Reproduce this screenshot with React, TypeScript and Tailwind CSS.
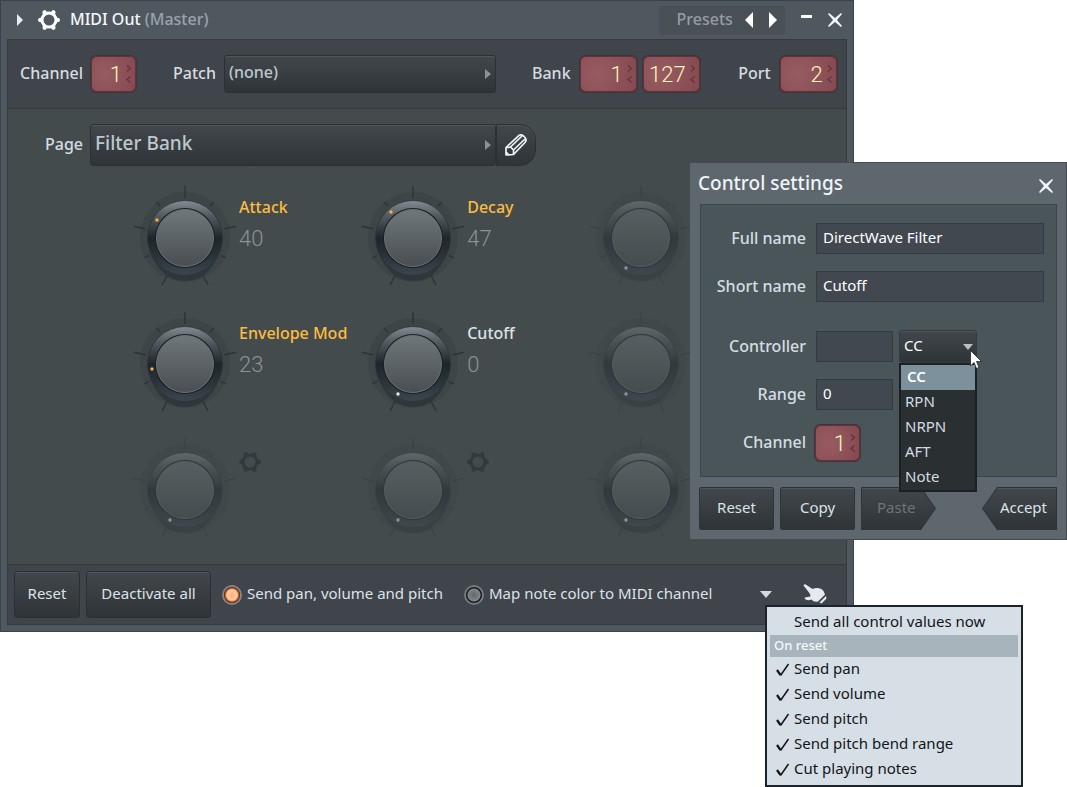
import { useId, useState } from "react"

type KnobData = {
  label: string
  value: number
  dot: [number, number]
  state: "linked" | "active" | "off"
}

const off: KnobData = { label: "", value: 0, dot: [37, 84], state: "off" }

const knobs: KnobData[] = [
  { label: "Attack", value: 40, dot: [24, 36], state: "linked" },
  { label: "Decay", value: 47, dot: [30, 28], state: "linked" },
  off,
  { label: "Envelope Mod", value: 23, dot: [19, 59], state: "linked" },
  { label: "Cutoff", value: 0, dot: [37, 84], state: "active" },
  off,
  off,
  off,
  off,
]

const controllerTypes = ["CC", "RPN", "NRPN", "AFT", "Note"]

const resetOptions = ["Send pan", "Send volume", "Send pitch", "Send pitch bend range", "Cut playing notes"]

const labelText = "text-base font-medium text-[#d5dde2] pb-[2px]"
const buttonFace = "bg-gradient-to-b from-[#42474c] to-[#2f3438] shadow-[inset_0_1px_0_#50565b]"
const field = "h-[31px] border border-[#333b42] bg-[#424850] px-[6px] pb-[3px] text-[15px] text-white outline-none"

function Gear({ className }: { className: string }) {
  return (
    <svg viewBox="-11 -11 22 22" className={className} aria-hidden="true">
      <circle r="7" fill="none" stroke="currentColor" strokeWidth="3" />
      {[0, 60, 120, 180, 240, 300].map((a) => (
        <path key={a} d="M6.5 -4 C7.6 -2.4 8.4 -2 9.6 -2 Q11 -1.6 11 0 Q11 1.6 9.6 2 C8.4 2 7.6 2.4 6.5 4Z" fill="currentColor" transform={`rotate(${a})`} />
      ))}
    </svg>
  )
}

function Cross() {
  return (
    <svg viewBox="0 0 14 14" className="size-[14px]" aria-hidden="true">
      <path d="M0 1 L1 0 L7 5 L13 0 L14 1 L9 7 L14 13 L13 14 L7 9 L1 14 L0 13 L5 7Z" fill="#f2f6f8" />
    </svg>
  )
}

function Spinner({ label, value, wide }: { label: string; value: string; wide?: boolean }) {
  return (
    <div className={`relative h-[38px] shrink-0 rounded-md border border-[#343a40] bg-[#6d2f37] p-px ${wide ? "w-[59px]" : "w-[47px]"}`}>
      <input
        aria-label={label}
        inputMode="numeric"
        defaultValue={value}
        className="block h-full w-full rounded-[5px] bg-[radial-gradient(circle_at_30%_50%,#985b62,#844a51)] pr-[13px] text-right font-['Roboto',sans-serif] text-[22px] font-light text-[#fdf6b8] outline-none"
      />
      <svg viewBox="0 0 6 20" className="absolute top-2 right-[4px] h-5 w-[6px]" aria-hidden="true">
        <path d="M1 1.500 L4.500 4.500 L1 7.500 M4.500 12.500 L1 15.500 L4.500 18.500" fill="none" stroke="#66303a" strokeWidth="1.200" />
      </svg>
    </div>
  )
}

function Knob({ knob }: { knob: KnobData }) {
  const id = useId()
  const isOff = knob.state === "off"
  const dotColor = knob.state === "linked" ? "#ffae3c" : "#e6edf0"
  return (
    <div className="flex h-[126px]">
      <div className="relative h-[104px] w-[104px] shrink-0">
        <svg viewBox="0 0 104 104" className={`h-full w-full ${isOff ? "opacity-45" : ""}`} aria-hidden="true">
          <defs>
            <linearGradient id={`${id}r`} x1="0" y1="0" x2="0" y2="1">
              <stop offset="0" stopColor="#858c90" />
              <stop offset="0.2" stopColor="#545c63" />
              <stop offset="0.5" stopColor="#1e252b" />
              <stop offset="0.75" stopColor="#2b333b" />
              <stop offset="1" stopColor="#3d454e" />
            </linearGradient>
            <linearGradient id={`${id}f`} x1="0" y1="0" x2="0" y2="1">
              <stop offset="0" stopColor="#70777a" />
              <stop offset="1" stopColor="#484e51" />
            </linearGradient>
          </defs>
          <circle cx="52" cy="53" r="45" fill="#3d4346" opacity="0.8" />
          <path
            d="M52 2V14 M76.700 22.300L81 18 M91.300 45L103 42.300 M87.700 71.300L93 74 M69.300 90.300L75 101 M27.300 22.300L23 18 M12.700 45L1 42.300 M16.300 71.300L11 74 M34.700 90.300L29 101"
            stroke="#2d3337"
            strokeWidth={isOff ? 1 : 1.4}
          />
          <path d="M14.500 56 C17 72 27 97 52 97 C77 97 87 72 89.500 56Z" fill="#30373b" />
          <circle cx="52" cy="54" r="37.500" fill={`url(#${id}r)`} stroke="#2c3338" strokeWidth="0.800" />
          <circle cx="52" cy="54" r="30" fill="#192024" />
          <circle cx="52" cy="54" r="28.500" fill={`url(#${id}f)`} stroke="#6b7275" strokeWidth="1" />
          <circle cx={knob.dot[0]} cy={knob.dot[1]} r="1.700" fill={dotColor} />
        </svg>
        <input
          type="range"
          min={0}
          max={127}
          defaultValue={knob.value}
          disabled={isOff}
          aria-label={knob.label || "Unassigned"}
          className="absolute inset-0 h-full w-full opacity-0"
        />
      </div>
      {isOff ? (
        <button aria-label="Assign control" className="mt-[15px] ml-[2px] size-[22px] text-[#33393d]">
          <Gear className="size-[22px]" />
        </button>
      ) : (
        <div className="pt-[11px] pl-[2px] whitespace-nowrap">
          <div className={`text-base leading-6 font-medium ${knob.state === "linked" ? "text-[#fdbc3f]" : "text-[#dbe3e8]"}`}>{knob.label}</div>
          <div className="mt-[5px] font-['Roboto',sans-serif] text-[22px] leading-[30px] font-light text-[#8b9298]">{knob.value}</div>
        </div>
      )}
    </div>
  )
}

function Picker({ label, value, large }: { label: string; value: string; large?: boolean }) {
  return (
    <div className="relative min-w-0 flex-1">
      <select
        aria-label={label}
        className={`block w-full appearance-none rounded-[3px] border border-[#2b3034] px-1 pb-1 font-medium text-[#bec8ce] outline-none ${buttonFace} ${large ? "h-[42px] text-[19px]" : "h-[38px] text-base"}`}
      >
        <option>{value}</option>
      </select>
      <svg viewBox="0 0 6 10" className="pointer-events-none absolute top-1/2 right-[5px] h-[10px] w-[6px] -translate-y-1/2" aria-hidden="true">
        <path d="M0 0 L6 5 L0 10Z" fill="#8a9298" />
      </svg>
    </div>
  )
}

function Lamp({ label, defaultChecked }: { label: string; defaultChecked?: boolean }) {
  return (
    <label className="flex items-center gap-[5px] text-[15px] whitespace-nowrap text-[#dbe3e8]">
      <input
        type="checkbox"
        defaultChecked={defaultChecked}
        className="size-5 shrink-0 appearance-none rounded-full border-2 border-[#767b7f] bg-[radial-gradient(circle,#62686b_0,#7f8588_6px,#15191c_7px)] checked:border-[#8a8483] checked:bg-[radial-gradient(circle_at_50%_50%,#ffa878_0,#ffd3a4_5px,#f58a55_6px,#3b0f08_8px)]"
      />
      <span className="pb-[2px]">{label}</span>
    </label>
  )
}

function TitleBar() {
  return (
    <header className="flex h-[38px] items-center pr-[5px] pl-[10px]">
      <button aria-label="Expand" className="w-[6px]">
        <svg viewBox="0 0 6 12" className="h-3 w-[6px]" aria-hidden="true">
          <path d="M0 0 L6 6 L0 12Z" fill="#e8eef2" />
        </svg>
      </button>
      <button aria-label="Plugin options" className="ml-[15px] text-white">
        <Gear className="size-[22px]" />
      </button>
      <h1 className="ml-[10px] pb-[2px] text-base font-medium text-[#f4f8fa]">
        MIDI Out <span className="text-[#9aa3aa]">(Master)</span>
      </h1>
      <div className="ml-auto flex h-[29px] items-center rounded-[3px] bg-[#495056] pr-2 pl-[18px]">
        <span className="w-[68px] pb-[2px] text-base font-medium text-[#959da4]">Presets</span>
        <button aria-label="Previous preset" className="mr-4">
          <svg viewBox="0 0 8 16" className="h-4 w-2" aria-hidden="true">
            <path d="M8 0 L0 8 L8 16Z" fill="#fff" />
          </svg>
        </button>
        <button aria-label="Next preset">
          <svg viewBox="0 0 8 16" className="h-4 w-2" aria-hidden="true">
            <path d="M0 0 L8 8 L0 16Z" fill="#fff" />
          </svg>
        </button>
      </div>
      <button aria-label="Minimize" className="ml-4 flex h-[14px] w-[11px]">
        <span className="mt-[2px] h-[3px] w-full bg-white" />
      </button>
      <button aria-label="Close" className="ml-4">
        <Cross />
      </button>
    </header>
  )
}

function MainWindow() {
  return (
    <main className="w-4/5 border border-[#3b4249] bg-[#50585f] px-[6px] pb-[6px]">
      <TitleBar />
      <div className="border border-[#353b41] bg-[#444b4d]">
        <div className="flex h-[69px] items-center border-b border-[#34393d] bg-[#40444b] pr-2">
          <span className={`${labelText} w-[75px] shrink-0 text-right`}>Channel</span>
          <span className="ml-[7px]">
            <Spinner label="Channel" value="1" />
          </span>
          <span className={`${labelText} mr-2 w-[79px] shrink-0 text-right`}>Patch</span>
          <Picker label="Patch" value="(none)" />
          <span className={`${labelText} mr-2 w-[75px] shrink-0 text-right`}>Bank</span>
          <div className="flex gap-1">
            <Spinner label="Bank MSB" value="1" wide />
            <Spinner label="Bank LSB" value="127" wide />
          </div>
          <span className={`${labelText} mr-2 w-[70px] shrink-0 text-right`}>Port</span>
          <Spinner label="Port" value="2" wide />
        </div>

        <div className="h-[455px] pt-[15px]">
          <div className="flex items-center">
            <span className={`${labelText} mr-[7px] w-[75px] shrink-0 text-right`}>Page</span>
            <div className="flex w-[446px]">
              <Picker label="Page" value="Filter Bank" large />
              <button aria-label="Rename page" className={`flex h-[42px] w-10 items-center justify-center rounded-r-[16px] border border-[#2b3034] ${buttonFace}`}>
                <svg viewBox="0 0 22 22" className="size-[22px]" fill="none" stroke="#eef4f8" strokeWidth="1.7" strokeLinejoin="round" aria-hidden="true">
                  <path d="M1 21 L1 13.500 L13.500 1.800 Q16 0 18.500 2 L20 3.500 Q22 6 20 8.500 L8.500 20.500Z" />
                  <path d="M1 13.500 L5.500 13 L8.500 16 L8.500 20.500 M5.500 13 L17 2 M8.500 16 L20 5 M1 18 L4 21" />
                </svg>
              </button>
            </div>
          </div>
          <div className="mt-[18px] mr-7 ml-[125px] grid grid-cols-3">
            {knobs.map((k, i) => (
              <Knob key={i} knob={k} />
            ))}
          </div>
        </div>

        <footer className="flex h-[60px] items-center border-t border-[#34393d] bg-[#40444b] px-[6px]">
          <button className={`h-[47px] w-[66px] rounded-[3px] border border-[#2a2f33] pb-[2px] text-[15px] text-[#dbe3e8] ${buttonFace}`}>Reset</button>
          <button className={`mr-[11px] ml-[6px] h-[47px] w-[125px] rounded-[3px] border border-[#2a2f33] pb-[2px] text-[15px] text-[#dbe3e8] ${buttonFace}`}>
            Deactivate all
          </button>
          <div className="w-[242px]">
            <Lamp label="Send pan, volume and pitch" defaultChecked />
          </div>
          <Lamp label="Map note color to MIDI channel" />
          <button aria-label="Options" className="ml-auto">
            <svg viewBox="0 0 12 7" className="h-[7px] w-3" aria-hidden="true">
              <path d="M0 0 H12 L6 7Z" fill="#d3dbe1" />
            </svg>
          </button>
          <button aria-label="Assign last tweaked" className="mr-[13px] ml-[31px]">
            <svg viewBox="0 0 24 22" className="h-[22px] w-6" aria-hidden="true">
              <path d="M0.500 1.500 Q1.500 -0.500 3.500 1 L9.500 5 Q12 3.500 15 4 Q19 4.500 20.500 7 L22 10.500 L15 17.500 Q11 18.500 8.500 15.500 Q4 17 2 15 Q1 13.500 3 13.200 L7.500 12.500 Q7.500 10 6 8.500Z" fill="#e3ebf1" />
              <path d="M16.500 18.500 L23 12 L23.500 14.500 L18.500 19.500Z" fill="#e3ebf1" />
            </svg>
          </button>
        </footer>
      </div>
    </main>
  )
}

function ControlDialog() {
  const [type, setType] = useState("CC")
  const rowLabel = `${labelText} w-[105px] shrink-0 text-right`
  const button = `h-[43px] w-[75px] rounded-[2px] border border-[#2d343a] pb-[2px] text-[15px] text-[#dbe3e8] ${buttonFace}`
  return (
    <section aria-label="Control settings" className="absolute top-[162px] right-0 w-[377px] border-t border-r border-b border-[#444b52] bg-[#5f676e] pr-[9px] pb-[9px] pl-[9px]">
      <header className="flex h-[41px] items-center justify-between pr-1">
        <h2 className="-ml-px text-[19px] font-medium text-[#eef4f7]">Control settings</h2>
        <button aria-label="Close settings" className="mt-1">
          <Cross />
        </button>
      </header>
      <div className="ml-px h-[273px] border border-[#3b454b] bg-[#4a555a] pt-[18px] pr-3">
        <div className="flex items-center gap-[10px]">
          <label htmlFor="full-name" className={rowLabel}>Full name</label>
          <input id="full-name" defaultValue="DirectWave Filter" className={`${field} min-w-0 flex-1`} />
        </div>
        <div className="mt-[17px] flex items-center gap-[10px]">
          <label htmlFor="short-name" className={rowLabel}>Short name</label>
          <input id="short-name" defaultValue="Cutoff" className={`${field} min-w-0 flex-1`} />
        </div>
        <div className="mt-7 flex items-center">
          <label htmlFor="controller" className={`${rowLabel} mr-[10px]`}>Controller</label>
          <input id="controller" className={`${field} w-[77px]`} />
          <div className="relative ml-[6px] w-[78px]">
            <select
              aria-label="Controller type"
              value={type}
              onChange={(e) => setType(e.target.value)}
              className={`block h-[33px] w-full appearance-none rounded-[3px] border border-[#343b40] px-1 pb-[2px] text-[15px] text-white outline-none ${buttonFace}`}
            >
              {controllerTypes.map((t) => (
                <option key={t}>{t}</option>
              ))}
            </select>
            <svg viewBox="0 0 10 6" className="pointer-events-none absolute top-[14px] right-1 h-[6px] w-[10px]" aria-hidden="true">
              <path d="M0 0 H10 L5 6Z" fill="#b7c1c7" />
            </svg>
            <ul className="absolute top-[33px] left-0 z-10 w-full border-2 border-[#1a2024] bg-[#2a2f32] text-[15px] leading-[23px] text-[#d3dbe0]">
              {controllerTypes.map((t) => (
                <li key={t}>
                  <button
                    onClick={() => setType(t)}
                    className={`block h-[25px] w-full pb-[2px] text-left ${t === type ? "bg-[#7d919c] pl-[6px] font-semibold text-white" : "pl-1"}`}
                  >
                    {t}
                  </button>
                </li>
              ))}
            </ul>
            <svg viewBox="0 0 12 20" className="pointer-events-none absolute top-5 left-[71px] z-20 h-5 w-3" aria-hidden="true">
              <path d="M0.500 0.500 V16 L4 12.500 L6.500 18.500 L9 17.500 L6.500 11.500 H11.500Z" fill="#fff" stroke="#14181a" strokeWidth="0.700" />
            </svg>
          </div>
        </div>
        <div className="mt-4 flex items-center gap-[10px]">
          <label htmlFor="range" className={rowLabel}>Range</label>
          <input id="range" defaultValue="0" className={`${field} w-[77px]`} />
        </div>
        <div className="mt-[14px] flex items-center gap-2">
          <span className={rowLabel}>Channel</span>
          <Spinner label="Control channel" value="1" />
        </div>
      </div>
      <div className="mt-[10px] flex gap-[6px]">
        <button className={button}>Reset</button>
        <button className={button}>Copy</button>
        <button disabled className="h-[43px] w-[75px] bg-[#2d343a] p-px text-[15px] text-[#6d7379] [clip-path:polygon(0_0,80%_0,100%_50%,80%_100%,0_100%)]">
          <span className={`flex h-full w-full items-center pb-[2px] pl-[15px] [clip-path:polygon(0_0,80%_0,100%_50%,80%_100%,0_100%)] ${buttonFace}`}>Paste</span>
        </button>
        <button className="ml-auto h-[43px] w-[75px] bg-[#2d343a] p-px text-[15px] text-[#dbe3e8] [clip-path:polygon(20%_0,100%_0,100%_100%,20%_100%,0_50%)]">
          <span className={`flex h-full w-full items-center justify-end pr-[9px] pb-[2px] [clip-path:polygon(20%_0,100%_0,100%_100%,20%_100%,0_50%)] ${buttonFace}`}>Accept</span>
        </button>
      </div>
    </section>
  )
}

function ResetMenu() {
  return (
    <div className="absolute top-[605px] right-11 w-[258px] border-2 border-[#1b242b] bg-[#d7dfe6] p-[3px] text-[15px] leading-[23px] text-[#111518]">
      <button className="block h-[25px] w-full pb-[2px] pl-6 text-left">Send all control values now</button>
      <div className="h-[22px] bg-[#a8b4bb] pl-1 text-[13px] leading-[21px] font-medium text-[#f4fafc]">On reset</div>
      {resetOptions.map((o) => (
        <label key={o} className="flex h-[25px] items-center pb-[2px]">
          <input type="checkbox" defaultChecked className="peer size-0 appearance-none" />
          <svg viewBox="0 0 14 14" className="mt-[2px] mr-1 ml-[6px] size-[14px] opacity-0 peer-checked:opacity-100" fill="none" stroke="#111518" aria-hidden="true">
            <path d="M1 7 L4.500 12" strokeWidth="2.200" />
            <path d="M4.500 12.500 L12.500 1" strokeWidth="1.500" />
          </svg>
          {o}
        </label>
      ))}
    </div>
  )
}

export default function App() {
  return (
    <div className="relative min-h-screen overflow-hidden bg-white font-['Noto_Sans','Open_Sans',sans-serif]">
      <MainWindow />
      <ControlDialog />
      <ResetMenu />
    </div>
  )
}
